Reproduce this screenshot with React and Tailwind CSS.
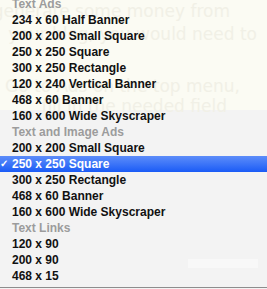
const groups = [
  {
    title: "Text Ads",
    items: [
      "234 x 60 Half Banner",
      "200 x 200 Small Square",
      "250 x 250 Square",
      "300 x 250 Rectangle",
      "120 x 240 Vertical Banner",
      "468 x 60 Banner",
      "160 x 600 Wide Skyscraper",
    ],
  },
  {
    title: "Text and Image Ads",
    items: [
      "200 x 200 Small Square",
      "250 x 250 Square",
      "300 x 250 Rectangle",
      "468 x 60 Banner",
      "160 x 600 Wide Skyscraper",
    ],
  },
  {
    title: "Text Links",
    items: ["120 x 90", "200 x 90", "468 x 15"],
  },
];

const selected = { group: 1, index: 1 };

const MenuItem = ({ label, active }) => (
  <div
    className={`relative flex h-4 items-center pl-3 ${
      active
        ? "bg-gradient-to-b from-[#5c8cf9] to-[#195af6] text-white"
        : "text-[#111111]"
    }`}
  >
    {active && (
      <span className="absolute left-0 top-0 flex h-4 items-center text-[10px] leading-none">
        ✓
      </span>
    )}
    {label}
  </div>
);

const App = () => {
  return (
    <div className="relative h-[289px] w-[267px] overflow-hidden bg-[#f3f3f3]">
      {/* blog page seen through the menu */}
      <div className="absolute inset-0 flex flex-col">
        <div className="flex h-[110px] flex-col items-end whitespace-nowrap bg-[#fbfbf3] font-['DejaVu_Sans',sans-serif] text-[17px] leading-[23px] text-[#f1f0e6]">
          <div className="pr-[37px]">ads to generate some money from</div>
          <div className="pr-[10px]">your blog, you would need to</div>
          <div className="mt-[29px] pr-[27px]">Go to Ads on the top menu,</div>
          <div className="-mt-[3px] pr-[40px]">fill in the needed field</div>
        </div>
        <div className="ml-[188px] mt-[149px] h-[9px] w-[70px] bg-[#f8f8f8]" />
      </div>

      {/* dropdown menu */}
      <div className="relative -mt-1 flex flex-col border-b border-[#8d8d8d] pb-[3px] font-['Liberation_Sans',Arial,sans-serif] text-[12px] font-bold">
        {groups.map((group, g) => (
          <div key={group.title} className="flex flex-col">
            <div className="flex h-4 items-center pl-3 text-[#9c9c9c]">
              {group.title}
            </div>
            {group.items.map((item, i) => (
              <MenuItem
                key={item + i}
                label={item}
                active={selected.group === g && selected.index === i}
              />
            ))}
          </div>
        ))}
      </div>
    </div>
  );
};

export default App;
